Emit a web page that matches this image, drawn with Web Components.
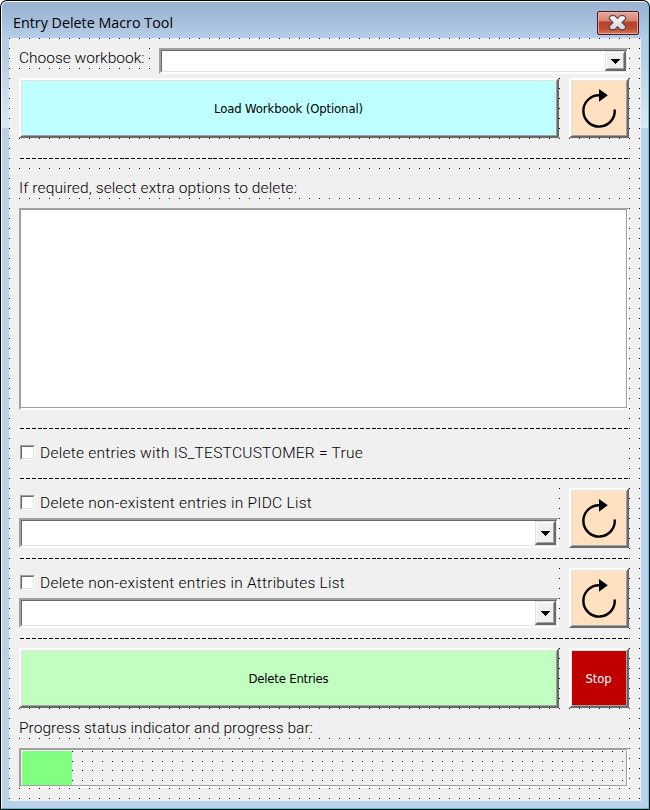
<!DOCTYPE html>
<html lang="en">
<head>
<meta charset="utf-8">
<title>Entry Delete Macro Tool</title>
<style>
html,body{margin:0;width:650px;height:810px;overflow:hidden;background:#fff}
</style>
</head>
<body>
<tool-window heading="Entry Delete Macro Tool">
  <form-row style="--h:40px;padding-top:10px">
    <form-label style="width:130px;height:19px" fit="125.5">Choose workbook:</form-label>
    <combo-box style="width:470px;margin-left:10px"></combo-box>
  </form-row>
  <form-row style="--h:60px">
    <push-button style="width:540px;--face:#c0ffff" fit="149">Load Workbook (Optional)</push-button>
    <push-button style="width:60px;margin-left:10px;--face:#ffe0c0"><refresh-icon></refresh-icon></push-button>
  </form-row>
  <form-row style="--h:40px;padding-top:1px"><dash-rule style="height:29px;--top:19px"></dash-rule></form-row>
  <form-row style="--h:30px"><form-label style="width:610px;height:20px" fit="278">If required, select extra options to delete:</form-label></form-row>
  <form-row style="--h:202px"><list-box></list-box></form-row>
  <form-row style="--h:28px"><dash-rule style="height:28px;--top:18px"></dash-rule></form-row>
  <form-row style="--h:30px"><check-box fit="323">Delete entries with IS_TESTCUSTOMER = True</check-box></form-row>
  <form-row style="--h:20px"><dash-rule style="height:20px;--top:10px"></dash-rule></form-row>
  <form-row style="--h:60px">
    <combo-group fit="272" caption="Delete non-existent entries in PIDC List"></combo-group>
    <push-button style="width:60px;margin-left:10px;--face:#ffe0c0"><refresh-icon></refresh-icon></push-button>
  </form-row>
  <form-row style="--h:20px"><dash-rule style="height:20px;--top:10px"></dash-rule></form-row>
  <form-row style="--h:60px">
    <combo-group fit="305" caption="Delete non-existent entries in Attributes List"></combo-group>
    <push-button style="width:60px;margin-left:10px;--face:#ffe0c0"><refresh-icon></refresh-icon></push-button>
  </form-row>
  <form-row style="--h:20px"><dash-rule style="height:20px;--top:10px"></dash-rule></form-row>
  <form-row style="--h:60px">
    <push-button style="width:540px;--face:#c0ffc0" fit="80">Delete Entries</push-button>
    <push-button style="width:60px;margin-left:10px;--face:#c00000;color:#fff" fit="26">Stop</push-button>
  </form-row>
  <form-row style="--h:40px;padding-top:10px"><form-label style="width:610px;height:20px" fit="294">Progress status indicator and progress bar:</form-label></form-row>
  <form-row style="--h:40px"><progress-frame></progress-frame></form-row>
</tool-window>
<script>
// Spreads the letters of a caption so that it fills the width given in "fit".
function fitText(host, span) {
  const w = parseFloat(host.getAttribute('fit'));
  if (!w || !span) return;
  span.style.letterSpacing = ((w - span.getBoundingClientRect().width) / host.textContent.length) + 'px';
}
function define(name, html, ready) {
  const t = document.createElement('template');
  t.innerHTML = html;
  customElements.define(name, class extends HTMLElement {
    constructor() {
      super();
      this.attachShadow({ mode: 'open' }).append(t.content.cloneNode(true));
    }
    connectedCallback() { if (ready) ready(this, this.shadowRoot); }
  });
}
define('tool-window', `
<style>
:host{display:block;box-sizing:border-box;width:650px;height:810px;padding:1px;background:#000;border-radius:7px 7px 0 0;
 font-family:"Open Sans",sans-serif;color:#000}
.frame{box-sizing:border-box;height:808px;width:648px;border:1px solid #f4f9fd;border-right-color:#2fdcf4;border-bottom-color:#2fc9e3;border-radius:6px 6px 0 0;
 background:linear-gradient(#99b4d1 0,#a0b9d7 12px,#b5cde8 36px,#b5cce7 50px,#dce8f5 126px,#b9d1ea 126px);padding:0 6px 7px 7px;display:flex;flex-direction:column}
.bar{height:36px;display:flex;justify-content:space-between}
.t{font-size:14.3px;line-height:18px;padding:12px 0 0 4px;white-space:pre}
.x{width:42px;height:24px;margin:9px 3px 0 0}
.client{flex:1;width:632px;box-sizing:border-box;padding-left:10px;background:
 conic-gradient(from 0deg at 1px 1px,#0000 270deg,#000 0) 0 0/10px 10px #f0f0f0}
</style>
<div class="frame"><div class="bar"><span class="t"></span>
<svg class="x" viewBox="0 0 42 24"><defs><linearGradient id="g" x2="0" y2="1"><stop offset="0" stop-color="#e9aaa0"/><stop offset=".43" stop-color="#d4816f"/><stop offset=".44" stop-color="#b93f28"/><stop offset=".75" stop-color="#bd4a32"/><stop offset="1" stop-color="#d97f62"/></linearGradient><linearGradient id="w" x2="0" y2="1"><stop offset="0" stop-color="#fff"/><stop offset="1" stop-color="#d2d2d8"/></linearGradient></defs>
<rect x=".5" y=".5" width="41" height="23" rx="1.5" fill="url(#g)" stroke="#4c1821"/><rect x="1.5" y="1.5" width="39" height="21" rx="1" fill="none" stroke="#efb9ac" stroke-opacity=".75"/>
<path d="M14 4.600h3.700l2.800 3.100 2.800-3.100H27l1.600 1.900v1.500L24.900 11.600l3.700 3.600v1.600L27 18.600h-3.700l-2.800-3.100-2.800 3.100H14l-1.600-1.800v-1.600l3.700-3.600L12.400 8V6.500z" fill="url(#w)" stroke="#5b4750" stroke-width="1.100" stroke-linejoin="round"/></svg></div>
<div class="client"><slot></slot></div></div>`, (h, r) => {
  const s = r.querySelector('.t');
  s.textContent = h.getAttribute('heading');
  s.style.letterSpacing = ((164 - s.getBoundingClientRect().width) / 23) + 'px';
});
define('form-row', `<style>:host{display:flex;height:var(--h);box-sizing:border-box;align-items:flex-start}</style><slot></slot>`);
define('form-label', `<style>:host{display:block;background:#f0f0f0;font:300 15.500px/20px Roboto,sans-serif;white-space:nowrap}</style><span><slot></slot></span>`,
  (h, r) => fitText(h, r.querySelector('span')));
define('combo-box', `
<style>
:host{display:flex;box-sizing:border-box;height:26px;border:2px solid #fff;border-top-color:#a0a0a0;border-left-color:#a0a0a0;background:#fff}
.in{flex:1;display:flex;justify-content:flex-end;border:1px solid #e3e3e3;border-top-color:#696969;border-left-color:#696969}
.b{display:flex;align-items:center;box-sizing:border-box;width:21px;padding:2px 0 0 5px;background:#f0f0f0;border:1px solid #e3e3e3;border-right:2px solid #696969;border-bottom:2px solid #696969;box-shadow:inset 1px 1px #fff,inset -1px -1px #a0a0a0}
svg{display:block;flex:none}
</style><div class="in"><div class="b"><svg width="9" height="5" shape-rendering="crispEdges"><path d="M0 0h9v1h-1v1h-1v1h-1v1h-1v1h-1v-1h-1v-1h-1v-1h-1v-1h-1z"/></svg></div></div>`);
define('push-button', `
<style>
:host{display:flex;box-sizing:border-box;height:60px;border:2px solid #fff;border-right-color:#696969;border-bottom-color:#696969;background:var(--face);
 box-shadow:inset 1px 1px #e3e3e3,inset -1px -1px #a0a0a0;align-items:center;justify-content:center;font:13px/16px "DejaVu Sans Condensed","DejaVu Sans",sans-serif;font-stretch:condensed;white-space:nowrap}
span{padding-top:2px;margin-left:-1px}
::slotted(refresh-icon){margin:-2px 0 0 1px}
</style><span><slot></slot></span>`, (h, r) => fitText(h, r.querySelector('span')));
define('refresh-icon', `
<style>:host{display:block;width:56px;height:56px}svg{display:block}</style>
<svg width="56" height="56" viewBox="0 0 56 56"><path d="M28 15.200A15.700 15.700 0 1 0 43.700 29.500" fill="none" stroke="#000" stroke-width="2.400"/><path d="M28 9L36.800 15.200L28 21.700z"/></svg>`);
define('dash-rule', `
<style>:host{display:block;box-sizing:border-box;width:609px;background:#f0f0f0;padding:var(--top) 0 0 1px}
svg{display:block}</style><svg width="608" height="1" shape-rendering="crispEdges"><path d="M0 .5H608" stroke="#000" stroke-dasharray="4 1.860"/></svg>`);
define('list-box', `<style>:host{display:block;box-sizing:border-box;width:610px;height:202px;border:2px solid #fff;border-top-color:#a0a0a0;border-left-color:#a0a0a0;background:#fff}
div{box-sizing:border-box;height:198px;border:solid #a0a0a0;border-width:0 1px 1px 0}</style><div></div>`);
define('check-box', `
<style>:host{display:flex;width:100%;max-width:610px;height:30px;background:#f0f0f0;align-items:flex-start;font:300 15.500px/20px Roboto,sans-serif;white-space:nowrap}
.o{box-sizing:border-box;width:15px;height:15px;margin:7px 5px 0 1px;background:#fff;border:1px solid #fff;border-top-color:#a0a0a0;border-left-color:#a0a0a0}
.i{box-sizing:border-box;height:13px;border:1px solid #e3e3e3;border-top-color:#696969;border-left-color:#696969}
span{padding-top:5px}
</style><div class="o"><div class="i"></div></div><span><slot></slot></span>`, (h, r) => fitText(h, r.querySelector('span')));
define('combo-group', `
<style>:host{display:flex;flex-direction:column;width:540px;height:60px}check-box{width:540px}</style>
<check-box></check-box><combo-box style="width:540px;height:30px"></combo-box>`, (h, r) => {
  const c = r.querySelector('check-box');
  c.textContent = h.getAttribute('caption');
  c.setAttribute('fit', h.getAttribute('fit'));
  customElements.upgrade(c);
  fitText(c, c.shadowRoot.querySelector('span'));
});
define('progress-frame', `
<style>:host{display:block;box-sizing:border-box;width:610px;height:40px;border:2px solid #fff;border-top-color:#a0a0a0;border-left-color:#a0a0a0}
.o{--d:linear-gradient(90deg,#000 1px,#0000 0);box-sizing:border-box;height:36px;border:1px solid #a0a0a0;border-top-color:#fff;border-left-color:#fff;
 background:var(--d) 0 0/10px 1px repeat-x,var(--d) 0 10px/10px 1px repeat-x,var(--d) 0 19px/10px 1px repeat-x,var(--d) 0 29px/10px 1px repeat-x,#f0f0f0}
.f{width:50px;height:34px;background:#80ff80}</style><div class="o"><div class="f"></div></div>`);
</script>
</body>
</html>
